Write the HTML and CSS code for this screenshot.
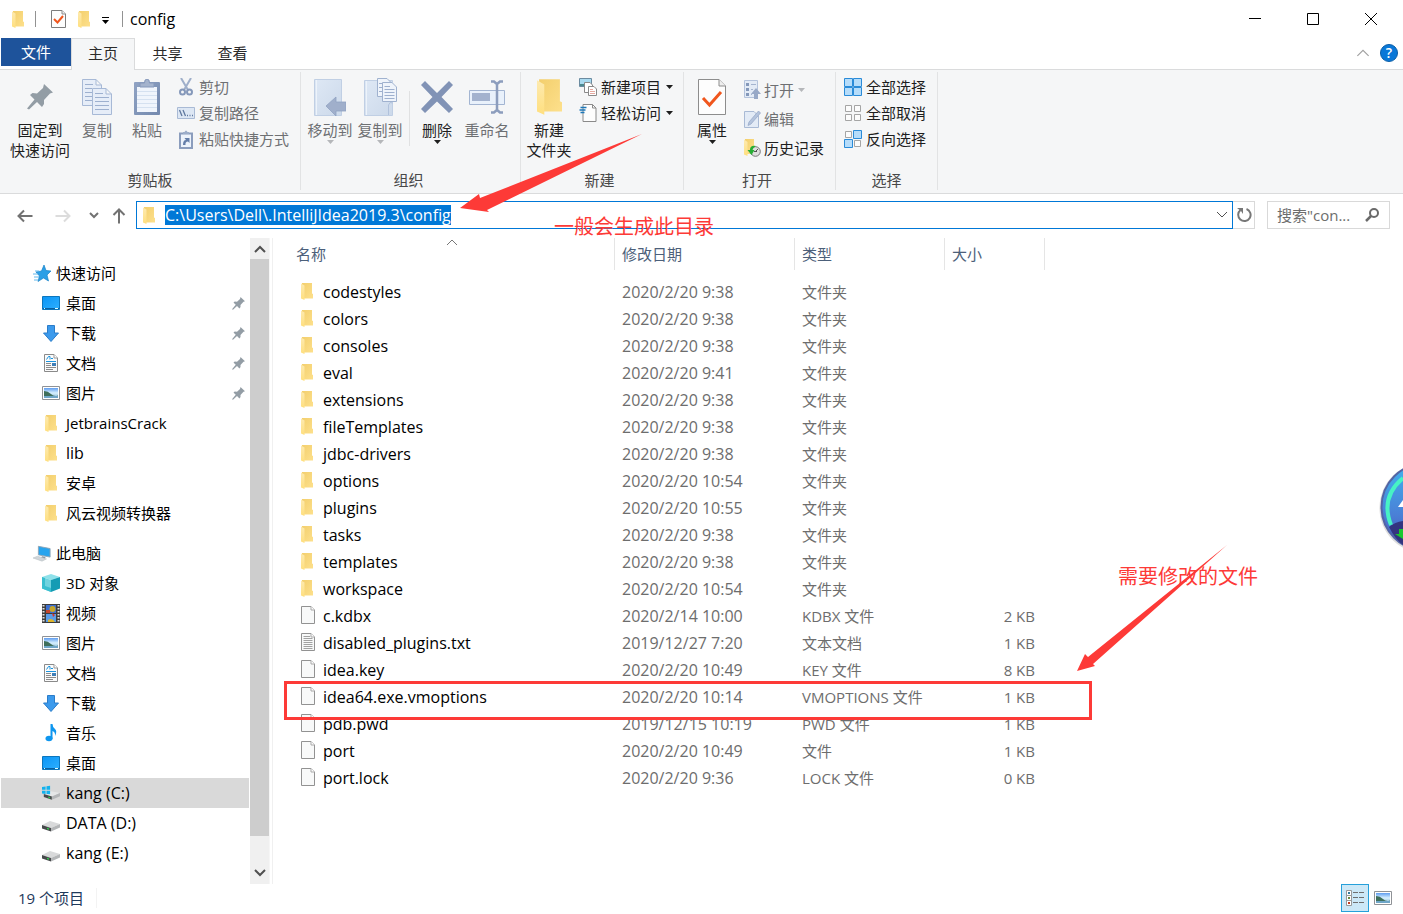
FILE: index.html
```html
<!DOCTYPE html>
<html lang="zh-CN">
<head>
<meta charset="utf-8">
<title>config</title>
<link rel="stylesheet" href="styles.css">
</head>
<body>
<svg class="sprite" aria-hidden="true">
  <defs>
    <linearGradient id="gFolder" x1="0" x2="1" y1="0" y2="1"><stop offset="0" stop-color="#f3cf6d"/><stop offset="1" stop-color="#fde08c"/></linearGradient>
    <linearGradient id="gFlap" x1="0" x2="0" y1="0" y2="1"><stop offset="0" stop-color="#fdeab0"/><stop offset="1" stop-color="#ffdf7e"/></linearGradient>
    <linearGradient id="gBlue" x1="0" x2="1" y1="0" y2="1"><stop offset="0" stop-color="#0a94f5"/><stop offset="1" stop-color="#2eb0ff"/></linearGradient>
    <linearGradient id="gSky" x1="0" x2="0" y1="0" y2="1"><stop offset="0" stop-color="#5f9df0"/><stop offset=".5" stop-color="#d8f1ff"/><stop offset="1" stop-color="#7fb0d0"/></linearGradient>
    <linearGradient id="gSteel" x1="0" x2="1" y1="0" y2="1"><stop offset="0" stop-color="#90a3c4"/><stop offset="1" stop-color="#7389ae"/></linearGradient>
    <linearGradient id="gBook" x1="0" x2="1" y1="0" y2="1"><stop offset="0" stop-color="#dee8f5"/><stop offset="1" stop-color="#ccd9ea"/></linearGradient>
    <linearGradient id="gBall" x1="0" x2="0" y1="0" y2="1"><stop offset="0" stop-color="#41b3ee"/><stop offset=".6" stop-color="#4a7fd6"/><stop offset="1" stop-color="#4750b4"/></linearGradient>
  </defs>
  <symbol id="folder" viewBox="0 0 12 17"><path d="M1 0H11V10.5L12 11V15.5H1z" fill="url(#gFolder)"/><path d="M0 .5 3.500 2.500V17L0 15.500z" fill="url(#gFlap)"/></symbol>
  <symbol id="doc" viewBox="0 0 14 18"><path d="M.5.5H10L13.500 4V17.500H.5z" fill="#f8f9f9" stroke="#929292"/><path d="M10 .5V4H13.500" fill="#fff" stroke="#a9a9a9"/></symbol>
  <symbol id="text" viewBox="0 0 14 18"><path d="M.5.5H10L13.500 4V17.500H.5z" fill="#f8f9f9" stroke="#929292"/><path d="M10 .5V4H13.500" fill="#fff" stroke="#a9a9a9"/><path d="M2.500 3.500H9M2.500 5.500H11.500M2.500 7.500H11.500M2.500 9.500H11.500M2.500 11.500H11.500M2.500 13.500H11.500M2.500 15.500H11.500" stroke="#a2a2a2"/></symbol>
  <symbol id="article" viewBox="0 0 14 18"><path d="M.5.5H10L13.500 4V17.500H.5z" fill="#fbfbfb" stroke="#8a8a8a"/><path d="M10 .5V4H13.500" fill="#fff" stroke="#999"/><path d="M2.500 5.500 4.500 2.500H6V5.500M7 4.500H9M2 7.500H12" stroke="#1a93dd" fill="none"/><path d="M2 9.500H7M2 11.500H7M2 13.500H12M2 15.500H9" stroke="#8b8b8b"/><path d="M8 9H12V12H8z" fill="#3f7fb8"/></symbol>
  <symbol id="desktop" viewBox="0 0 18 14"><path d="M.5.5H17.500V13.500H.5z" fill="url(#gBlue)" stroke="#0c76bd"/><path d="M1 12.500H17" stroke="#0a5fa0"/><path d="M2 12.500H3M13 12.500H16" stroke="#dff"/></symbol>
  <symbol id="down" viewBox="0 0 16 17"><path d="M4.500.5H11.500V8H15.500L8 16.500.5 8H4.500z" fill="#3c9aec" stroke="#2b7cc9"/></symbol>
  <symbol id="picture" viewBox="0 0 18 14"><path d="M.5.5H17.500V13.500H.5z" fill="#fff" stroke="#8f9296"/><path d="M2 2H16V12H2z" fill="url(#gSky)"/><path d="M2 5Q6 5 9 8T16 9.500V10H2z" fill="#3f6f5b"/><path d="M2 10H16V12H2z" fill="#6fa6c8"/></symbol>
  <symbol id="star" viewBox="0 0 18 17"><path d="M11 0 13 5.500 18 6 14 10 15.500 16 10.500 13 5 16.500 6.500 11 3 7 8.500 6z" fill="#2c9fe6" stroke="#1782c8" stroke-width=".7"/><path d="M2 6H6M0 9H5M1 12H6M1 15H5" stroke="#62b8ec"/></symbol>
  <symbol id="pc" viewBox="0 0 20 18"><path d="M6 1 19 3.500V13L6 10.500z" fill="#27a4ee" stroke="#8fa4b3"/><path d="M10 12 14 13 13 15 9 14z" fill="#8694a0"/><path d="M0 14 5 12 15 15 10 17.500z" fill="#d0d5d9" stroke="#b9bfc4" stroke-width=".6"/></symbol>
  <symbol id="cube" viewBox="0 0 18 18"><path d="M9 0 18 3 9 6 0 3z" fill="#8fe1ea"/><path d="M0 3 9 6V18L0 14.500z" fill="#6fd3df"/><path d="M18 3 9 6V18L18 14.500z" fill="#159cb4"/><path d="M0 3 3 4V12L9 14V18L0 14.500z" fill="#38bfd0"/></symbol>
  <symbol id="film" viewBox="0 0 18 19"><path d="M0 0H18V19H0z" fill="#3d3d3d"/><path d="M1.500 1V19M16.500 1V19" stroke="#e2e2e2" stroke-width="2" stroke-dasharray="1.500 1.500"/><path d="M4 1H14V9H4z" fill="#3c6fd0"/><path d="M4 10H14V18H4z" fill="#5b9ee8"/><circle cx="10.500" cy="5" r="3" fill="#c6a52a"/><path d="M4 6H8V9H4z" fill="#c4452c"/><path d="M10 9 13 11 11 13z" fill="#d3332b"/><path d="M6 16Q10 13 13 18H6z" fill="#e0b529"/></symbol>
  <symbol id="note" viewBox="0 0 12 18"><ellipse cx="4" cy="14.500" rx="3.500" ry="2.800" fill="#0e96ef"/><path d="M5.500 0H7.500Q7.500 3 10 5T10 12Q10.500 8 7.500 7V15H5.500z" fill="#0e96ef"/></symbol>
  <symbol id="drive" viewBox="0 0 18 12"><path d="M0 5 8 1 18 4 9 8z" fill="#d9dadb"/><path d="M0 5 9 8V11.500L0 8.500z" fill="#46494b"/><path d="M9 8 18 4V7.500L9 11.500z" fill="#b4b6b8"/><path d="M5 7.800 7 8.500V9.800L5 9z" fill="#2fd84b"/></symbol>
  <symbol id="windrive" viewBox="0 0 20 16"><path d="M2 9 10 6 20 8 11 12z" fill="#e6e7e8"/><path d="M2 9 11 12V15.500L2 12.500z" fill="#46494b"/><path d="M11 12 20 8V11.500L11 15.500z" fill="#b4b6b8"/><path d="M7 12 9 12.600V14L7 13.300z" fill="#2fd84b"/><path d="M0 1.200 4 .7V4.500H0zM5 .6 9 0V4.500H5zM0 5.500H4V9L0 8.500zM5 5.500H9V9.500L5 9z" fill="#12b2ee"/></symbol>
  <symbol id="pin" viewBox="0 0 26 26"><path d="M17 0 26 8.500 23 9.500 17 16 17 20 15 23 10 18 2 25.500 0 24.500 7.500 15.500 3 11 5.500 9 10 9.500 16 4z" fill="#939da5"/></symbol>
  <symbol id="check" viewBox="0 0 28 36"><path d="M.5.5H21L27.500 7V35.500H.5z" fill="#fdfdfd" stroke="#8d8d8d"/><path d="M21 .5V7H27.500" fill="#eee" stroke="#8d8d8d"/><path d="M5 19 11.500 26 23 13" fill="none" stroke="#f0561d" stroke-width="3"/></symbol>
  <symbol id="checksmall" viewBox="0 0 15 18"><path d="M.5.5H11L14.500 4V17.500H.5z" fill="#fdfdfd" stroke="#7d7d7d"/><path d="M11 .5V4H14.500" fill="#eee" stroke="#8d8d8d"/><path d="M3 9 6.500 12.500 12 6" fill="none" stroke="#f0561d" stroke-width="2"/></symbol>
  <symbol id="copy" viewBox="0 0 30 36"><g fill="#e6edf8" stroke="#a7b9d6"><path d="M.5.5H14L19.500 6V26.500H.5zM14 .5V6H19.500"/><path d="M10.500 9.500H24L29.500 15V35.500H10.500zM24 9.500V15H29.500"/></g><path d="M3 5.500H11M3 9.500H10M3 13.500H10M3 17.500H10M3 21.500H10M13 14.500H21M13 18.500H27M13 22.500H27M13 26.500H27M13 30.500H27" stroke="#9db0cf"/></symbol>
  <symbol id="paste" viewBox="0 0 26 36"><rect y="3" width="26" height="33" rx="1" fill="url(#gSteel)"/><path d="M3 8H23V33H3z" fill="#f0f5fc"/><path d="M3 12.500H23M3 16.500H23M3 20.500H23M3 24.500H23M3 28.500H23" stroke="#d5e1f0"/><path d="M6 8V4H10.500Q10.500 0 13 0T15.500 4H20V8z" fill="#a4b3cd" stroke="#8598ba"/></symbol>
  <symbol id="cut" viewBox="0 0 14 18"><path d="M2 0 9 12M12 0 5 12" stroke="#9fafca" stroke-width="2" fill="none"/><circle cx="3.500" cy="14" r="2.500" fill="none" stroke="#8598ba" stroke-width="2"/><circle cx="10.500" cy="14" r="2.500" fill="none" stroke="#8598ba" stroke-width="2"/></symbol>
  <symbol id="path" viewBox="0 0 18 12"><path d="M.5.5H17.500V11.500H.5z" fill="#dde7f4" stroke="#a9bad5"/><path d="M2.500 3 5 9M6 3 8.500 9M10 8.500H11M12.500 8.500H13.500M15 8.500H16" stroke="#5f789f" stroke-width="1.300"/></symbol>
  <symbol id="shortcut" viewBox="0 0 14 19"><path d="M1 3.500H13V18H1z" fill="#edf3fb" stroke="#8b9dbd" stroke-width="2"/><path d="M4 4V2H5.500Q7-1 8.500 2H10V4z" fill="#9cadc9"/><path d="M4 15Q4 10 7 10L5.500 8H10.500V13L9 11.500Q6 11.500 6.500 15z" fill="#647ea9"/></symbol>
  <symbol id="moveto" viewBox="0 0 32 37"><path d="M.5.5H27.500V36.500H.5z" fill="url(#gBook)" stroke="#c0cfe4"/><path d="M2.500 1V36" stroke="#edf3fa"/><path d="M12 27 22 18V23H32V32H22V37z" fill="#a0afcb" stroke="#91a2c1" stroke-width=".8"/></symbol>
  <symbol id="copyto" viewBox="0 0 33 38"><path d="M.5 2.500H28.500V37.500H.5z" fill="url(#gBook)" stroke="#c0cfe4"/><path d="M2.500 3V37" stroke="#edf3fa"/><path d="M24.500 37V27Q26 23 28.500 25" fill="none" stroke="#b1c2dc"/><g fill="#eff4fb" stroke="#a0b2cf"><path d="M13.500.5H23L27.500 5V18.500H13.500z"/><path d="M18.500 4.500H28L32.500 9V23.500H18.500z"/></g><path d="M15 5.500H18M15 9.500H18M15 13.500H18M20.500 8.500H26M20.500 11.500H30.500M20.500 14.500H30.500M20.500 17.500H30.500M20.500 20.500H30.500" stroke="#9eb0ce"/></symbol>
  <symbol id="delete" viewBox="0 0 32 32"><path d="M4 0 16 12 28 0 32 4 20.500 16 32 28 28 32 16 20.500 4 32 0 28 11.500 16 0 4z" fill="#8193b6"/></symbol>
  <symbol id="rename" viewBox="0 0 36 34"><path d="M.5 10.500H35.500V24.500H.5z" fill="#e9f1fb" stroke="#a3b5d2"/><path d="M3 13H21V21H3z" fill="#a3b2ce"/><path d="M22 1.500H25L28 4 31 1.500H34M28 4V30M22 32.500H25L28 30 31 32.500H34" fill="none" stroke="#8c9dbd" stroke-width="2.500"/></symbol>
  <symbol id="newitem" viewBox="0 0 18 18"><path d="M.5.5H12.500V8.500H.5z" fill="#a9daf0" stroke="#6b8ba0"/><path d="M1 6H12V8H1z" fill="#4d8a8f"/><path d="M5.500 4.500H11L13.500 7V14.500H5.500z" fill="#fff" stroke="#8a8a8a"/><path d="M9.500 8.500H15L17.500 11V17.500H9.500z" fill="#fff" stroke="#8a8a8a"/><path d="M11 11.500H14M11 13.500H16M11 15.500H16" stroke="#e5a9a0"/></symbol>
  <symbol id="easy" viewBox="0 0 17 18"><path d="M3.500.5H13L16.500 4V17.500H3.500z" fill="#fdfdfd" stroke="#8a8a8a"/><path d="M13 .5V4H16.500" fill="none" stroke="#8a8a8a"/><path d="M1 3.500H7M0 6H6M1 8.500H5" stroke="#1e78b9" stroke-width="1.400"/></symbol>
  <symbol id="open" viewBox="0 0 17 19"><path d="M.5.5H13.500V17.500H.5z" fill="#e3ebf6" stroke="#b4c3dc"/><path d="M2 3H5V6H2zM2 8H5V11H2zM2 13H5V16H2z" fill="#8498ba"/><path d="M7 4.500H12M7 9.500H9M7 14.500H8" stroke="#a4b4cf"/><path d="M12 8 17 14H14V19H10V14H7z" fill="#98a9c7"/></symbol>
  <symbol id="edit" viewBox="0 0 17 18"><path d="M.5 1.500H10L14.500 6V17.500H.5z" fill="#e3ebf6" stroke="#a9bad5"/><path d="M14.500 1 16.500 3 7 14 4 15.500 5 12z" fill="#b4c4dd" stroke="#92a5c5" stroke-width=".7"/></symbol>
  <symbol id="history" viewBox="0 0 17 18"><path d="M1 0H10V15H1z" fill="url(#gFolder)"/><path d="M0 .5 3.500 3V17L0 15.500z" fill="url(#gFlap)"/><circle cx="11.500" cy="12.500" r="4.800" fill="#dedede" stroke="#777"/><path d="M11.500 12.500 14 10M10 12.500H13" stroke="#555" fill="none"/><path d="M12 7Q6 6 6 11H3.500L7.500 16 10.500 11H8.500Q9 8.500 12 7" fill="#27ad35"/></symbol>
  <symbol id="selall" viewBox="0 0 18 18"><path d="M.5.5H8.500V8.500H.5zM9.500.5H17.500V8.500H9.500zM.5 9.500H8.500V17.500H.5zM9.500 9.500H17.500V17.500H9.500z" fill="#b5dcfa" stroke="#2a8bd8"/></symbol>
  <symbol id="selnone" viewBox="0 0 18 18"><path d="M1.500 1.500H7.500V7.500H1.500zM10.500 1.500H16.500V7.500H10.500zM1.500 10.500H7.500V16.500H1.500zM10.500 10.500H16.500V16.500H10.500z" fill="#fcfcfc" stroke="#a5a5a5"/></symbol>
  <symbol id="selinv" viewBox="0 0 18 18"><path d="M1.500 1.500H7.500V7.500H1.500zM10.500 10.500H16.500V16.500H10.500z" fill="#fcfcfc" stroke="#a5a5a5"/><path d="M9.500.5H17.500V8.500H9.500zM.5 9.500H8.500V17.500H.5z" fill="#b5dcfa" stroke="#2a8bd8"/></symbol>
  <symbol id="caret" viewBox="0 0 7 4"><path d="M0 0H7L3.500 4z" fill="currentColor"/></symbol>
  <symbol id="chevup" viewBox="0 0 12 8"><path d="M1 7 6 2 11 7" fill="none" stroke="currentColor"/></symbol>
  <symbol id="chevdown" viewBox="0 0 12 8"><path d="M1 1 6 6 11 1" fill="none" stroke="currentColor"/></symbol>
</svg>

<header class="titlebar">
  <svg class="i12"><use href="#folder"/></svg>
  <span class="bar"></span>
  <button class="qa" aria-label="属性"><svg class="i15"><use href="#checksmall"/></svg></button>
  <button class="qa" aria-label="新建文件夹"><svg class="i12"><use href="#folder"/></svg></button>
  <button class="qa menu" aria-label="自定义快速访问工具栏"><svg width="7" height="7"><path d="M0 .5H7" stroke="#000"/><path d="M0 3H7L3.500 7z"/></svg></button>
  <span class="bar"></span>
  <h1 class="title">config</h1>
  <div class="winctl">
    <button aria-label="最小化"><svg width="12" height="12"><path d="M0 5.500H12" stroke="#000"/></svg></button>
    <button aria-label="最大化"><svg width="12" height="12"><path d="M.5.5H11.500V11.500H.5z" fill="none" stroke="#000"/></svg></button>
    <button aria-label="关闭"><svg width="12" height="12"><path d="M0 0 12 12M12 0 0 12" stroke="#000"/></svg></button>
  </div>
</header>

<nav class="tabs">
  <button class="tab file">文件</button>
  <button class="tab active">主页</button>
  <button class="tab">共享</button>
  <button class="tab">查看</button>
  <div class="tabs-end">
    <button class="plain light" aria-label="折叠功能区"><svg width="14" height="9"><use href="#chevup"/></svg></button>
    <button class="help" aria-label="帮助">?</button>
  </div>
</nav>

<section class="ribbon">
  <div class="group g-clip">
    <div class="tools">
      <button class="big wide"><span class="pic"><svg width="26" height="26"><use href="#pin"/></svg></span>固定到<br>快速访问</button>
      <button class="big off"><span class="pic"><svg width="30" height="36"><use href="#copy"/></svg></span>复制</button>
      <button class="big off"><span class="pic"><svg width="26" height="36"><use href="#paste"/></svg></span>粘贴</button>
      <div class="stack">
        <button class="small off"><svg width="18" height="18"><use href="#cut"/></svg>剪切</button>
        <button class="small off"><svg width="18" height="12"><use href="#path"/></svg>复制路径</button>
        <button class="small off"><svg width="18" height="19"><use href="#shortcut"/></svg>粘贴快捷方式</button>
      </div>
    </div>
    <div class="caption">剪贴板</div>
  </div>
  <div class="group g-org">
    <div class="tools">
      <button class="big off"><span class="pic"><svg width="32" height="37"><use href="#moveto"/></svg></span>移动到<svg class="caret"><use href="#caret"/></svg></button>
      <button class="big off"><span class="pic"><svg width="33" height="38"><use href="#copyto"/></svg></span>复制到<svg class="caret"><use href="#caret"/></svg></button>
      <span class="rule"></span>
      <button class="big"><span class="pic"><svg width="32" height="32"><use href="#delete"/></svg></span>删除<svg class="caret"><use href="#caret"/></svg></button>
      <button class="big off"><span class="pic"><svg width="36" height="34"><use href="#rename"/></svg></span>重命名</button>
    </div>
    <div class="caption">组织</div>
  </div>
  <div class="group g-new">
    <div class="tools">
      <button class="big"><span class="pic"><svg width="25" height="36"><use href="#folder"/></svg></span>新建<br>文件夹</button>
      <div class="stack">
        <button class="small"><svg width="18" height="18"><use href="#newitem"/></svg>新建项目<svg class="caret"><use href="#caret"/></svg></button>
        <button class="small"><svg width="18" height="18"><use href="#easy"/></svg>轻松访问<svg class="caret"><use href="#caret"/></svg></button>
      </div>
    </div>
    <div class="caption">新建</div>
  </div>
  <div class="group g-open">
    <div class="tools">
      <button class="big"><span class="pic"><svg width="28" height="36"><use href="#check"/></svg></span>属性<svg class="caret"><use href="#caret"/></svg></button>
      <div class="stack tall">
        <button class="small off"><svg width="17" height="19"><use href="#open"/></svg>打开<svg class="caret"><use href="#caret"/></svg></button>
        <button class="small off"><svg width="17" height="18"><use href="#edit"/></svg>编辑</button>
        <button class="small"><svg width="17" height="18"><use href="#history"/></svg>历史记录</button>
      </div>
    </div>
    <div class="caption">打开</div>
  </div>
  <div class="group g-sel">
    <div class="tools">
      <div class="stack">
        <button class="small"><svg width="18" height="18"><use href="#selall"/></svg>全部选择</button>
        <button class="small"><svg width="18" height="18"><use href="#selnone"/></svg>全部取消</button>
        <button class="small"><svg width="18" height="18"><use href="#selinv"/></svg>反向选择</button>
      </div>
    </div>
    <div class="caption">选择</div>
  </div>
</section>

<section class="location">
  <div class="history">
    <button class="plain" aria-label="后退"><svg width="16" height="14"><path d="M15.500 7H1.500M7 1.500 1.500 7 7 12.500" fill="none" stroke="#727272" stroke-width="2"/></svg></button>
    <button class="plain" aria-label="前进"><svg width="16" height="14"><path d="M.5 7H14.500M9 1.500 14.500 7 9 12.500" fill="none" stroke="#dcdcdc" stroke-width="2"/></svg></button>
    <button class="plain" aria-label="最近位置"><svg width="10" height="7"><path d="M1 1 5 5 9 1" fill="none" stroke="#727272" stroke-width="2"/></svg></button>
    <button class="plain" aria-label="上移"><svg width="14" height="16"><path d="M7 15.500V1.500M1.500 7 7 1.500 12.500 7" fill="none" stroke="#727272" stroke-width="2"/></svg></button>
  </div>
  <div class="address">
    <svg class="i12"><use href="#folder"/></svg>
    <input class="path" type="text" aria-label="地址" value="C:\Users\Dell\.IntelliJIdea2019.3\config">
    <button class="plain drop" aria-label="以前的位置"><svg width="12" height="8"><use href="#chevdown"/></svg></button>
  </div>
  <button class="refresh" aria-label="刷新"><svg width="16" height="16"><path d="M10.500 2A6.200 6.200 0 1 1 4.500 3" fill="none" stroke="#777" stroke-width="2"/><path d="M1 1H7V7L5 4z" fill="#777"/></svg></button>
  <div class="search">
    <input type="text" aria-label="搜索" placeholder='搜索"con...'>
    <svg width="14" height="14"><circle cx="9" cy="5" r="4" fill="none" stroke="#6a6a6a" stroke-width="2"/><path d="M6 8 1 13" stroke="#6a6a6a" stroke-width="2.500"/></svg>
  </div>
</section>

<main class="content">
  <nav class="tree">
    <a class="root" href="#"><svg width="18" height="17"><use href="#star"/></svg>快速访问</a>
    <a href="#"><svg class="ic" height="14"><use href="#desktop"/></svg>桌面<svg class="pinned"><use href="#pin"/></svg></a>
    <a href="#"><svg class="ic" height="17"><use href="#down"/></svg>下载<svg class="pinned"><use href="#pin"/></svg></a>
    <a href="#"><svg class="ic" height="18"><use href="#article"/></svg>文档<svg class="pinned"><use href="#pin"/></svg></a>
    <a href="#"><svg class="ic" height="14"><use href="#picture"/></svg>图片<svg class="pinned"><use href="#pin"/></svg></a>
    <a href="#"><svg class="ic" height="17"><use href="#folder"/></svg>JetbrainsCrack</a>
    <a class="latin" href="#"><svg class="ic" height="17"><use href="#folder"/></svg>lib</a>
    <a href="#"><svg class="ic" height="17"><use href="#folder"/></svg>安卓</a>
    <a href="#"><svg class="ic" height="17"><use href="#folder"/></svg>风云视频转换器</a>
    <a class="root next" href="#"><svg width="18" height="17"><use href="#pc"/></svg>此电脑</a>
    <a href="#"><svg class="ic" height="18"><use href="#cube"/></svg>3D 对象</a>
    <a href="#"><svg class="ic" height="19"><use href="#film"/></svg>视频</a>
    <a href="#"><svg class="ic" height="14"><use href="#picture"/></svg>图片</a>
    <a href="#"><svg class="ic" height="18"><use href="#article"/></svg>文档</a>
    <a href="#"><svg class="ic" height="17"><use href="#down"/></svg>下载</a>
    <a href="#"><svg class="ic" height="18"><use href="#note"/></svg>音乐</a>
    <a href="#"><svg class="ic" height="14"><use href="#desktop"/></svg>桌面</a>
    <a class="latin current" href="#"><svg class="ic" height="16"><use href="#windrive"/></svg>kang (C:)</a>
    <a class="latin" href="#"><svg class="ic low" height="12"><use href="#drive"/></svg>DATA (D:)</a>
    <a class="latin" href="#"><svg class="ic low" height="12"><use href="#drive"/></svg>kang (E:)</a>
  </nav>
  <div class="scroll">
    <button class="plain" aria-label="向上滚动"><svg width="12" height="8"><path d="M1 7 6 2 11 7" fill="none" stroke="#505050" stroke-width="2"/></svg></button>
    <div class="thumb"></div>
    <button class="plain end" aria-label="向下滚动"><svg width="12" height="8"><path d="M1 1 6 6 11 1" fill="none" stroke="#505050" stroke-width="2"/></svg></button>
  </div>
  <div class="files">
    <table>
      <colgroup><col class="c-name"><col class="c-date"><col class="c-type"><col class="c-size"></colgroup>
      <thead><tr>
        <th><div class="h first">名称<svg class="sort"><use href="#chevup"/></svg></div></th>
        <th><div class="h">修改日期</div></th>
        <th><div class="h">类型</div></th>
        <th><div class="h">大小</div></th>
      </tr></thead>
      <tbody>
        <tr><td><svg><use href="#folder"/></svg>codestyles</td><td>2020/2/20 9:38</td><td>文件夹</td><td></td></tr>
        <tr><td><svg><use href="#folder"/></svg>colors</td><td>2020/2/20 9:38</td><td>文件夹</td><td></td></tr>
        <tr><td><svg><use href="#folder"/></svg>consoles</td><td>2020/2/20 9:38</td><td>文件夹</td><td></td></tr>
        <tr><td><svg><use href="#folder"/></svg>eval</td><td>2020/2/20 9:41</td><td>文件夹</td><td></td></tr>
        <tr><td><svg><use href="#folder"/></svg>extensions</td><td>2020/2/20 9:38</td><td>文件夹</td><td></td></tr>
        <tr><td><svg><use href="#folder"/></svg>fileTemplates</td><td>2020/2/20 9:38</td><td>文件夹</td><td></td></tr>
        <tr><td><svg><use href="#folder"/></svg>jdbc-drivers</td><td>2020/2/20 9:38</td><td>文件夹</td><td></td></tr>
        <tr><td><svg><use href="#folder"/></svg>options</td><td>2020/2/20 10:54</td><td>文件夹</td><td></td></tr>
        <tr><td><svg><use href="#folder"/></svg>plugins</td><td>2020/2/20 10:55</td><td>文件夹</td><td></td></tr>
        <tr><td><svg><use href="#folder"/></svg>tasks</td><td>2020/2/20 9:38</td><td>文件夹</td><td></td></tr>
        <tr><td><svg><use href="#folder"/></svg>templates</td><td>2020/2/20 9:38</td><td>文件夹</td><td></td></tr>
        <tr><td><svg><use href="#folder"/></svg>workspace</td><td>2020/2/20 10:54</td><td>文件夹</td><td></td></tr>
        <tr><td><svg class="f"><use href="#doc"/></svg>c.kdbx</td><td>2020/2/14 10:00</td><td>KDBX 文件</td><td>2 KB</td></tr>
        <tr><td><svg class="f"><use href="#text"/></svg>disabled_plugins.txt</td><td>2019/12/27 7:20</td><td>文本文档</td><td>1 KB</td></tr>
        <tr><td><svg class="f"><use href="#doc"/></svg>idea.key</td><td>2020/2/20 10:49</td><td>KEY 文件</td><td>8 KB</td></tr>
        <tr><td><svg class="f"><use href="#doc"/></svg>idea64.exe.vmoptions</td><td>2020/2/20 10:14</td><td>VMOPTIONS 文件</td><td>1 KB</td></tr>
        <tr><td><svg class="f"><use href="#doc"/></svg>pdb.pwd</td><td>2019/12/15 10:19</td><td>PWD 文件</td><td>1 KB</td></tr>
        <tr><td><svg class="f"><use href="#doc"/></svg>port</td><td>2020/2/20 10:49</td><td>文件</td><td>1 KB</td></tr>
        <tr><td><svg class="f"><use href="#doc"/></svg>port.lock</td><td>2020/2/20 9:36</td><td>LOCK 文件</td><td>0 KB</td></tr>
      </tbody>
    </table>
  </div>
</main>

<footer class="status">
  <span class="count">19 个项目</span>
  <button class="view on" aria-label="详细信息"><svg width="18" height="17"><path d="M.5.5H5.500V5.500H.5zM.5 5.500H5.500V10.500H.5zM.5 10.500H5.500V15.500H.5z" fill="#fff" stroke="#999"/><path d="M2 3H4" stroke="#337a9a" stroke-width="2"/><path d="M2 8H4" stroke="#6a8a3c" stroke-width="2"/><path d="M2 13H4" stroke="#c23b22" stroke-width="2"/><path d="M7 2.500H12M13 2.500H18M7 7.500H12M13 7.500H18M7 12.500H12M13 12.500H18" stroke="#6f6f6f"/></svg></button>
  <button class="view" aria-label="大图标"><svg width="18" height="14"><use href="#picture"/></svg></button>
</footer>

<div class="mark box"></div>
<svg class="mark arrow-a" width="182" height="78" viewBox="0 0 182 78"><path d="M182 0 27 76 29 78 0 74 19 60 20 64z" fill="#fd3a37"/></svg>
<div class="mark note-a">一般会生成此目录</div>
<svg class="mark arrow-b" width="152" height="128" viewBox="0 0 152 128"><path d="M150 0 16 119 18 121 0 126 8 109 11 112z" fill="#fd3a37"/></svg>
<div class="mark note-b">需要修改的文件</div>
<svg class="mark ball" width="26" height="92" viewBox="0 0 26 92"><circle cx="48" cy="47" r="45.500" fill="#777" opacity=".25"/><circle cx="48" cy="46" r="43.500" fill="url(#gBall)" stroke="#5365a5" stroke-width="2"/><path d="M12 66Q18 61 26 60V84Q18 78 12 66z" fill="#33357f"/><path d="M26 17Q3 36 14 64" fill="none" stroke="#47f3c4" stroke-width="4"/><path d="M26 39 21 46H26z" fill="#fff"/><path d="M22 68H26V78L18 73H22z" fill="#19c82f"/></svg>
</body>
</html>
```
FILE: styles.css
```css
* { box-sizing: border-box; }
body {
  margin: 0;
  position: relative;
  min-height: 100vh;
  display: flex;
  flex-direction: column;
  overflow: hidden;
  background: #fff;
  color: #000;
  font: 15px/20px "Open Sans", "Noto Sans CJK SC", sans-serif;
}
button, input { font: inherit; color: inherit; background: none; border: 0; padding: 0; margin: 0; }
svg { display: block; flex: none; }
.sprite { position: absolute; width: 0; height: 0; }
.i12 { width: 12px; height: 17px; }
.i15 { width: 15px; height: 18px; }
.plain { display: flex; align-items: center; justify-content: center; color: #505050; }
.light { color: #a0a0a0; }

.titlebar { display: flex; align-items: center; height: 38px; padding-left: 12px; }
.bar { width: 1px; height: 16px; margin: 0 15px 0 11px; background: #929292; }
.qa { margin-right: 12px; }
.menu { margin: 2px 0 0; }
.menu + .bar { margin: 0 7px 0 13px; }
.title { margin: 0; font-size: 16px; font-weight: 400; }
.winctl { display: flex; margin: 0 3px 0 auto; }
.winctl button { display: flex; align-items: center; justify-content: center; width: 58px; height: 38px; }

.tabs { display: flex; height: 32px; border-bottom: 1px solid #dadbdc; padding-left: 1px; }
.tab { width: 65px; height: 31px; padding-bottom: 2px; color: #2b2b2b; }
.file { width: 70px; height: 28px; padding: 0; background: #1e539b; color: #fff; }
.active { width: 64px; height: 32px; padding-bottom: 4px; background: #f5f6f7; border: 1px solid #dadbdc; border-bottom: 0; }
.tabs-end { display: flex; align-items: center; gap: 10px; margin-left: auto; padding: 0 5px 2px 0; }
.help { width: 18px; height: 18px; border: 1px solid #0a5ea8; border-radius: 50%; background: #0a78d8; color: #fff; font-size: 14px; line-height: 16px; font-weight: 600; }

.ribbon { display: flex; padding: 2px 0 3px; height: 124px; background: #f5f6f7; border-bottom: 1px solid #dadbdc; color: #1e1e1e; }
.group { display: flex; flex-direction: column; justify-content: space-between; border-right: 1px solid #e2e3e4; }
.g-clip { width: 301px; padding-left: 8px; }
.g-org { width: 220px; padding-left: 4px; }
.g-new { width: 163px; padding-left: 3px; }
.g-open { width: 152px; padding-left: 3px; }
.g-sel { width: 102px; padding-left: 8px; }
.tools { display: flex; align-items: flex-start; }
.big { display: flex; flex-direction: column; align-items: center; width: 50px; padding-top: 4px; white-space: nowrap; line-height: 20px; }
.wide { width: 64px; }
.pic { display: flex; align-items: center; justify-content: center; height: 42px; margin-bottom: 2px; }
.caret { width: 7px; height: 4px; }
.small .caret { margin-left: 1px; }
.off { color: #6e7073; }
.off .caret { color: #b5b7ba; }
.stack { display: flex; flex-direction: column; align-items: flex-start; padding: 2px 0 0 5px; }
.g-sel .stack { padding-left: 0; }
.small { display: flex; align-items: center; gap: 4px; height: 26px; white-space: nowrap; }
.tall { padding-left: 7px; padding-top: 3px; }
.tall .small { height: 29px; gap: 3px; }
.rule { width: 1px; height: 55px; margin: 19px 2px 0 4px; background: #e0e1e2; }
.caption { padding-right: 8px; text-align: center; color: #484848; }

.location { display: flex; align-items: flex-start; height: 44px; padding: 7px 13px 0 17px; }
.history { display: flex; align-items: center; width: 119px; height: 28px; padding-top: 1px; }
.history button + button { margin-left: 22px; }
.history button:nth-child(3) { margin-left: 18px; }
.history button:nth-child(4) { margin-left: 13px; }
.address { flex: 1; display: flex; align-items: center; height: 28px; border: 1px solid #0078d7; padding: 0 4px 0 6px; }
.path { field-sizing: content; margin-left: 10px; height: 20px; background: #0078d7; color: #fff; font-size: 16px; }
.drop { margin-left: auto; }
.refresh { display: flex; align-items: center; justify-content: center; width: 22px; height: 28px; border: 1px solid #d9d9d9; border-left: 0; }
.search { display: flex; align-items: center; width: 123px; height: 28px; margin-left: 12px; padding: 0 10px 0 9px; border: 1px solid #d9d9d9; }
.search input { flex: 1; min-width: 0; }
.search input::placeholder { color: #6d6d6d; opacity: 1; }

.content { flex: 1; display: flex; }
.tree { width: 250px; padding: 20px 1px 0; }
.tree a { display: flex; align-items: center; gap: 6px; height: 30px; padding-left: 41px; color: #000; text-decoration: none; white-space: nowrap; }
.tree .root { padding-left: 32px; gap: 5px; }
.tree .next { margin-top: 10px; }
.tree .latin { font-size: 16px; }
.tree .current { background: #d9d9d9; }
.ic { width: 18px; }
.low { margin-top: 6px; }
.pinned { width: 13px; height: 13px; margin-left: auto; margin-right: 4px; }
.scroll { display: flex; flex-direction: column; width: 20px; background: #f0f0f0; border-right: 1px solid #f6f6f6; }
.scroll button { height: 21px; }
.thumb { flex: 1; background: #cdcdcd; }
.scroll .end { height: 48px; padding-top: 26px; }

.files { flex: 1; margin-left: 2px; border-left: 1px solid #f0f0f0; }
table { table-layout: fixed; width: 772px; border-collapse: collapse; }
.c-name { width: 342px; }
.c-date { width: 180px; }
.c-type { width: 150px; }
.c-size { width: 100px; }
th, td { padding: 0; text-align: left; font-weight: 400; white-space: nowrap; }
.h { display: flex; align-items: center; height: 32px; margin-bottom: 8px; padding-left: 7px; border-right: 1px solid #e5e5e5; color: #4c607a; }
.first { padding-left: 23px; align-items: flex-start; padding-top: 6px; }
.sort { width: 12px; height: 8px; margin: -6px auto 0 120px; color: #777; }
td { height: 27px; padding-left: 7px; color: #6d6d6d; }
td:first-child { display: flex; align-items: center; padding-left: 28px; color: #000; font-size: 16px; }
td:nth-child(2) { font-size: 16px; }
td:last-child { text-align: right; padding-right: 10px; }
td svg { width: 12px; height: 17px; margin-right: 10px; }
td .f { width: 14px; height: 18px; margin: 0 8px 2px 0; }

.status { display: flex; align-items: center; height: 30px; padding: 0 6px 2px 18px; color: #1e395b; }
.count { margin-right: auto; padding-right: 12px; border-right: 1px solid #f3f3f3; }
.view { display: flex; align-items: center; justify-content: center; width: 28px; height: 28px; }
.on { background: #cce8f7; border: 1px solid #26a0da; }

.mark { position: absolute; pointer-events: none; color: #fd3a37; font-size: 20px; line-height: 24px; white-space: nowrap; }
.box { left: 284px; top: 681px; width: 808px; height: 39px; border: 3px solid #fd3a37; }
.arrow-a { left: 460px; top: 134px; }
.note-a { left: 554px; top: 215px; }
.arrow-b { left: 1077px; top: 545px; }
.note-b { left: 1118px; top: 565px; }
.ball { right: 0; top: 461px; }
```
